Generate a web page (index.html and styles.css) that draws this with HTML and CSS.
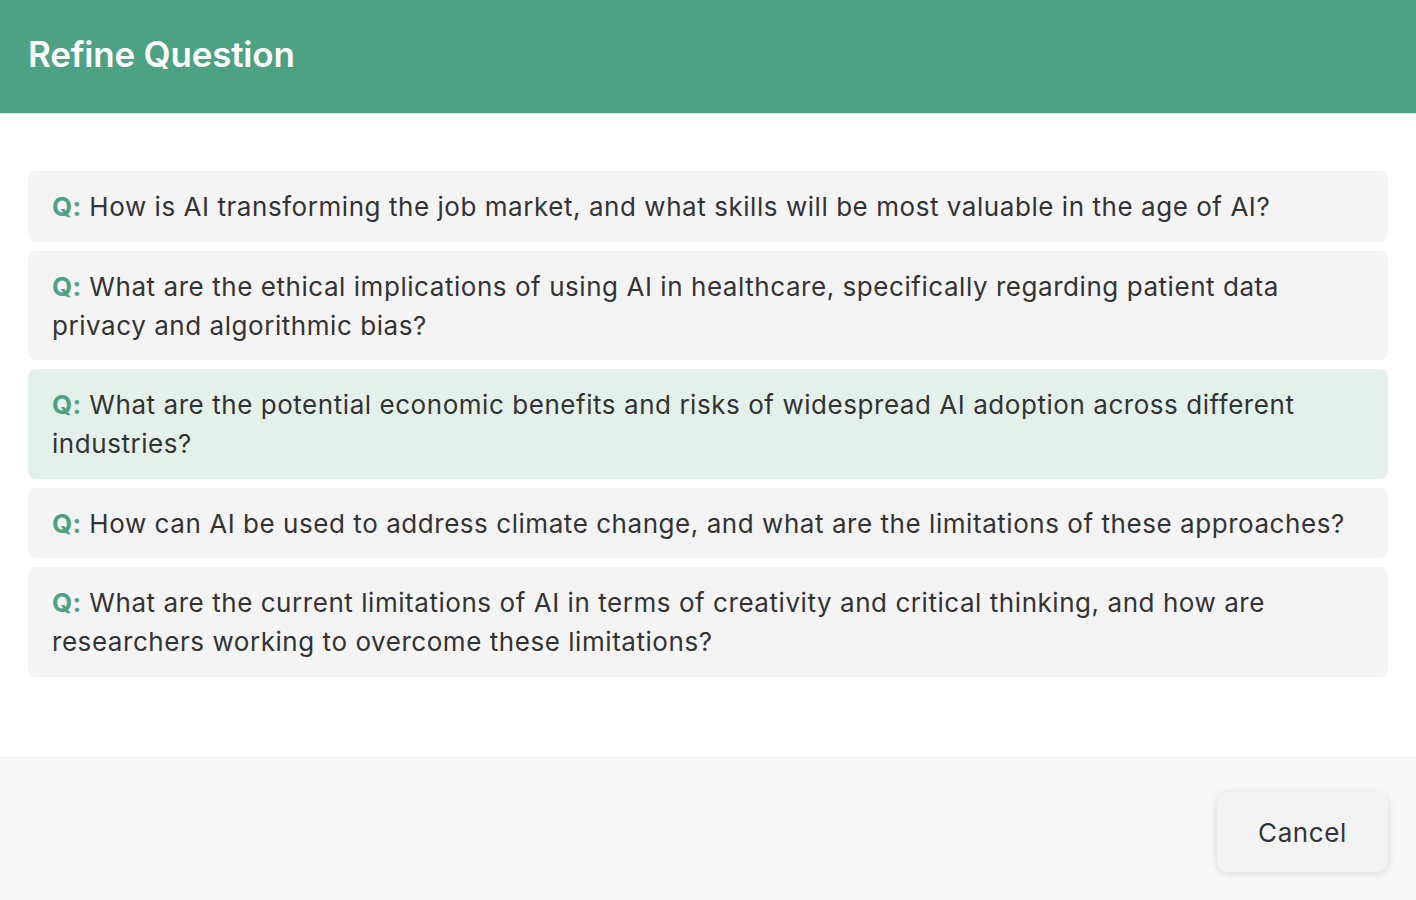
FILE: index.html
```html
<!DOCTYPE html>
<html lang="en">
<head>
<meta charset="utf-8">
<title>Refine Question</title>
<link rel="stylesheet" href="styles.css">
</head>
<body>
<div class="modal">
  <header class="modal-header">
    <h1 class="modal-title">Refine Question</h1>
  </header>
  <main class="modal-body">
    <ul class="question-list">
      <li class="question"><span class="q-label">Q:</span> <span class="q-text">How is AI transforming the job market, and what skills will be most valuable in the age of AI?</span></li>
      <li class="question"><span class="q-label">Q:</span> <span class="q-text">What are the ethical implications of using AI in healthcare, specifically regarding patient data privacy and algorithmic bias?</span></li>
      <li class="question question-active"><span class="q-label">Q:</span> <span class="q-text">What are the potential economic benefits and risks of widespread AI adoption across different industries?</span></li>
      <li class="question"><span class="q-label">Q:</span> <span class="q-text">How can AI be used to address climate change, and what are the limitations of these approaches?</span></li>
      <li class="question"><span class="q-label">Q:</span> <span class="q-text">What are the current limitations of AI in terms of creativity and critical thinking, and how are researchers working to overcome these limitations?</span></li>
    </ul>
  </main>
  <footer class="modal-footer">
    <button class="btn-cancel" type="button">Cancel</button>
  </footer>
</div>
</body>
</html>
```
FILE: styles.css
```css
* { box-sizing: border-box; }
html, body {
  margin: 0;
  padding: 0;
  background: #ffffff;
}
body {
  font-family: Inter, "Noto Sans", "Liberation Sans", sans-serif;
  color: #333333;
}
.modal {
  width: 1416px;
  height: 900px;
  display: flex;
  flex-direction: column;
  background: #ffffff;
}
.modal-header {
  height: 114px;
  background: #4ca283;
  border-bottom: 1px solid #dfe3e1;
  padding: 0 28px;
  display: flex;
  align-items: center;
}
.modal-title {
  margin: 0;
  color: #ffffff;
  font-size: 35px;
  font-weight: 600;
  letter-spacing: -0.2px;
  line-height: 1;
  padding-bottom: 4px;
}
.modal-body {
  flex: 1;
  padding: 57px 28px 0;
}
.question-list {
  list-style: none;
  margin: 0;
  padding: 0;
  display: flex;
  flex-direction: column;
  gap: 9px;
}
.question {
  background: #f4f4f4;
  border-radius: 8px;
  padding: 16px 24px 15.5px;
  font-size: 26px;
  line-height: 39px;
  letter-spacing: 0.55px;
  color: #333333;
}
.question-active {
  background: #e3f1ea;
}
.q-label {
  color: #4ca283;
  font-weight: 700;
  letter-spacing: 0.3px;
}
.modal-footer {
  height: 143px;
  background: #f8f8f8;
  border-top: 1px solid #ececec;
  padding: 34px 28px 0;
  display: flex;
  justify-content: flex-end;
  align-items: flex-start;
}
.btn-cancel {
  width: 171px;
  height: 80px;
  border: none;
  border-radius: 12px;
  background: #f3f3f3;
  color: #333333;
  font-family: Inter, "Noto Sans", "Liberation Sans", sans-serif;
  font-size: 26px;
  letter-spacing: 0.6px;
  box-shadow: 0 2px 8px rgba(0, 0, 0, 0.12);
  cursor: pointer;
}
```
